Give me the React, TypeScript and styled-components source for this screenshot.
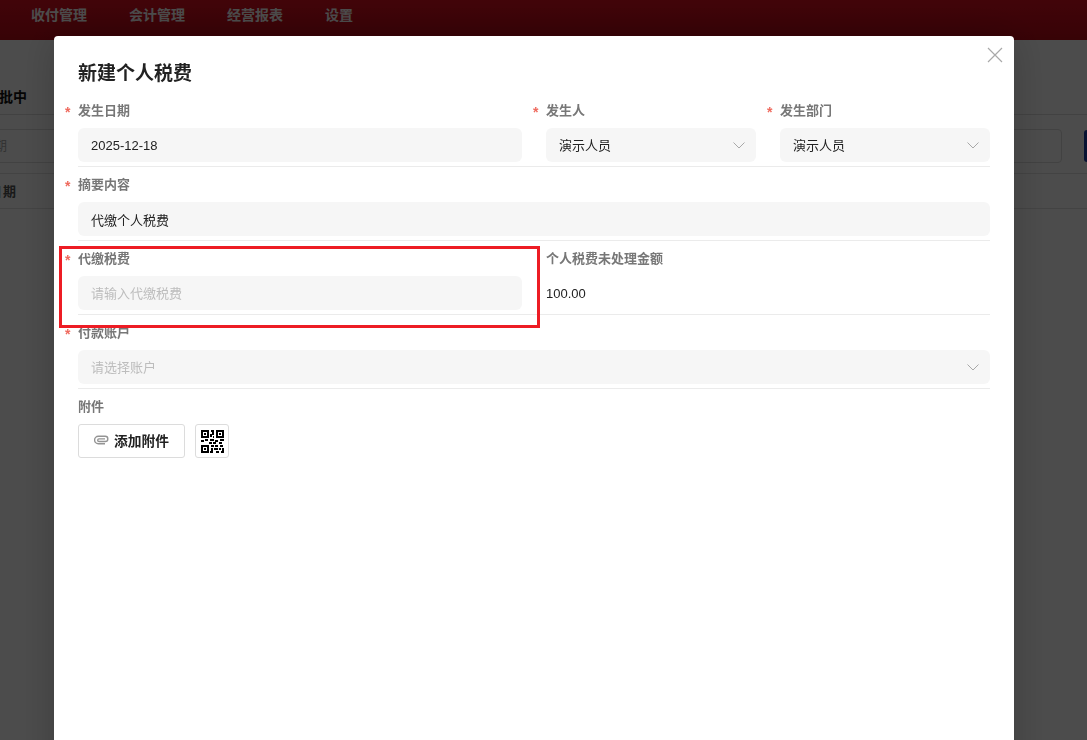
import * as React from 'react';
import styled, { createGlobalStyle } from 'styled-components';

const GlobalStyle = createGlobalStyle`
  html, body {
    margin: 0;
    height: 100%;
    overflow: hidden;
    font-family: "Liberation Sans", "Noto Sans CJK SC", sans-serif;
  }
`;

const FONT = `"Liberation Sans", "Noto Sans CJK SC", sans-serif`;

const Page = styled.div`
  height: 740px;
  background: #fff;
  overflow: hidden;
`;

const TopBar = styled.div`
  height: 40px;
  display: flex;
  gap: 42px;
  padding-left: 31px;
  align-items: flex-start;
  background: linear-gradient(#dc0f20, #b80a16);
`;

const NavItem = styled.div`
  font-size: 14px;
  font-weight: 700;
  line-height: 30px;
  color: #fff;
`;

const PageBody = styled.div`
  margin-left: -60px;
  padding-top: 46px;
`;

const PageTitle = styled.div`
  padding-left: 45px;
  height: 28px;
  line-height: 22px;
  font-size: 14px;
  font-weight: 700;
  color: #111;
  border-bottom: 1px solid #ddd;
`;

const FilterRow = styled.div`
  margin-top: 14px;
  padding-right: 25px;
  display: flex;
  justify-content: space-between;
  align-items: flex-start;
  gap: 8px;
`;

const DateBox = styled.div`
  width: 160px;
  height: 32px;
  padding-left: 40px;
  border: 1px solid #ddd;
  border-radius: 4px;
  font-size: 13px;
  line-height: 32px;
  color: #aaa;
`;

const FilterBox = styled.div`
  width: 100px;
  height: 32px;
  border: 1px solid #ddd;
  border-radius: 4px;
`;

const PrimaryStub = styled.div`
  position: fixed;
  left: 1084px;
  top: 130px;
  width: 10px;
  height: 32px;
  border-radius: 3px;
  background: #1d3fa8;
`;

const TableHead = styled.div`
  margin-top: 10px;
  height: 34px;
  padding-left: 49px;
  font-size: 13px;
  font-weight: 700;
  line-height: 36px;
  color: #555;
  border-top: 1px solid #e2e2e2;
  border-bottom: 1px solid #e2e2e2;
  letter-spacing: 1px;
`;

const Mask = styled.div`
  position: fixed;
  inset: 0;
  background: rgba(0, 0, 0, 0.7);
`;

const Modal = styled.div`
  position: fixed;
  left: 54px;
  top: 36px;
  width: 960px;
  height: 760px;
  box-sizing: border-box;
  padding: 0 24px;
  background: #fff;
  border-radius: 4px;
  box-shadow: 0 0 40px rgba(0, 0, 0, 0.2);
  font-family: ${FONT};
`;

const CloseButton = styled.button`
  position: absolute;
  top: 11px;
  right: 11px;
  width: 16px;
  height: 16px;
  padding: 0;
  border: 0;
  background: none;
  display: block;
`;

const ModalTitle = styled.h2`
  margin: 0;
  padding-top: 26px;
  height: 38px;
  font-size: 19px;
  line-height: 24px;
  font-weight: 700;
  color: #222;
`;

const Row = styled.div<{ $cols: string }>`
  display: grid;
  grid-template-columns: ${(p) => p.$cols};
  column-gap: 24px;
  height: 67px;
  margin-bottom: 7px;
  box-sizing: border-box;
  padding-bottom: 4px;
  border-bottom: 1px solid #ebebeb;
`;

const Field = styled.div`
  display: flex;
  flex-direction: column;
`;

const Label = styled.label<{ $required?: boolean }>`
  position: relative;
  height: 22px;
  margin-bottom: 6px;
  font-size: 13px;
  font-weight: 700;
  line-height: 22px;
  color: #777;

  &::before {
    content: ${(p) => (p.$required ? '"*"' : 'none')};
    position: absolute;
    left: -13px;
    top: 1px;
    font-size: 14px;
    font-weight: 700;
    color: #ef6a5e;
  }
`;

const Control = styled.div<{ $muted?: boolean }>`
  height: 34px;
  box-sizing: border-box;
  padding: 0 13px;
  display: flex;
  align-items: center;
  justify-content: space-between;
  background: #f6f6f6;
  border-radius: 6px;
  font-size: 13px;
  color: ${(p) => (p.$muted ? '#bdbdbd' : '#222')};
`;

const Placeholder = styled.span`
  position: relative;
  top: -1px;
`;

const StaticValue = styled.div`
  height: 34px;
  line-height: 36px;
  font-size: 13px;
  color: #222;
`;

const Chevron = () => (
  <svg width="12" height="7" viewBox="0 0 12 7" fill="none" stroke="#a8a8a8" strokeWidth="1">
    <path d="M0.5 0.5 L6 6 L11.5 0.5" />
  </svg>
);

const SelectControl = styled(Control)`
  padding-right: 11px;
`;

const AttachSection = styled.div`
  display: flex;
  flex-direction: column;
`;

const AttachActions = styled.div`
  display: flex;
  gap: 10px;
`;

const AttachButton = styled.button`
  width: 107px;
  height: 34px;
  padding: 0 0 2px;
  display: flex;
  align-items: center;
  justify-content: center;
  gap: 5px;
  background: #fff;
  border: 1px solid #dcdcdc;
  border-radius: 3px;
  font-family: ${FONT};
  font-size: 13.75px;
  font-weight: 700;
  color: #222;
`;

const QrButton = styled.button`
  width: 34px;
  height: 34px;
  padding: 0;
  display: flex;
  align-items: center;
  justify-content: center;
  background: #fff;
  border: 1px solid #dcdcdc;
  border-radius: 3px;
`;

const Highlight = styled.div`
  position: fixed;
  left: 59px;
  top: 246px;
  width: 481px;
  height: 82px;
  box-sizing: border-box;
  border: 3px solid #ed1c24;
`;

const QR_MODULES = [
  [10, 0, 3, 2], [11, 2, 2, 3], [9, 4, 2, 3], [12, 6, 1, 2],
  [0, 10, 3, 2], [4, 9, 3, 2], [9, 9, 4, 2], [14, 10, 3, 2], [19, 9, 4, 2],
  [8, 12, 3, 2], [12, 12, 3, 2], [18, 12, 3, 2],
  [10, 15, 3, 2], [14, 15, 3, 2], [19, 15, 3, 2],
  [10, 18, 2, 3], [13, 18, 4, 2], [18, 18, 2, 2], [21, 18, 2, 3],
  [9, 21, 3, 2], [15, 21, 3, 2], [20, 21, 3, 2],
];

const QrIcon = () => (
  <svg width="23" height="23" viewBox="0 0 23 23" shapeRendering="crispEdges">
    {[[0, 0], [15, 0], [0, 15]].map(([x, y]) => (
      <g key={`${x}-${y}`}>
        <rect x={x + 1} y={y + 1} width="6" height="6" fill="none" stroke="#000" strokeWidth="2" />
        <rect x={x + 3} y={y + 3} width="2" height="2" fill="#000" />
      </g>
    ))}
    {QR_MODULES.map(([x, y, w, h]) => (
      <rect key={`${x}-${y}`} x={x} y={y} width={w} height={h} fill="#000" />
    ))}
  </svg>
);

const ClipIcon = () => (
  <svg width="15" height="10" viewBox="0 0 15 10" fill="none" stroke="#949494" strokeWidth="1.4">
    <path d="M11 8.7 H4.3 A3.7 3.7 0 0 1 4.3 1.3 H11.2 A2.6 2.6 0 0 1 11.2 6.5 H5 A1.3 1.3 0 0 1 5 3.9 H11" />
  </svg>
);

export default function App() {
  return (
    <>
      <GlobalStyle />
      <Page>
        <TopBar>
          <NavItem>收付管理</NavItem>
          <NavItem>会计管理</NavItem>
          <NavItem>经营报表</NavItem>
          <NavItem>设置</NavItem>
        </TopBar>
        <PageBody>
          <PageTitle>审批中</PageTitle>
          <FilterRow>
            <DateBox>日期</DateBox>
            <FilterBox />
          </FilterRow>
          <TableHead>日期</TableHead>
        </PageBody>
        <PrimaryStub />
      </Page>
      <Mask />
      <Modal>
        <CloseButton aria-label="关闭">
          <svg width="16" height="16" viewBox="0 0 16 16" stroke="#a9a9a9" strokeWidth="1.2">
            <path d="M1 1 L15 15 M15 1 L1 15" />
          </svg>
        </CloseButton>
        <ModalTitle>新建个人税费</ModalTitle>
        <Row $cols="444px 210px 210px">
          <Field>
            <Label $required>发生日期</Label>
            <Control>2025-12-18</Control>
          </Field>
          <Field>
            <Label $required>发生人</Label>
            <SelectControl>
              <Placeholder>演示人员</Placeholder>
              <Chevron />
            </SelectControl>
          </Field>
          <Field>
            <Label $required>发生部门</Label>
            <SelectControl>
              <Placeholder>演示人员</Placeholder>
              <Chevron />
            </SelectControl>
          </Field>
        </Row>
        <Row $cols="1fr">
          <Field>
            <Label $required>摘要内容</Label>
            <Control>代缴个人税费</Control>
          </Field>
        </Row>
        <Row $cols="444px 444px">
          <Field>
            <Label $required>代缴税费</Label>
            <Control $muted>
              <Placeholder>请输入代缴税费</Placeholder>
            </Control>
          </Field>
          <Field>
            <Label>个人税费未处理金额</Label>
            <StaticValue>100.00</StaticValue>
          </Field>
        </Row>
        <Row $cols="1fr">
          <Field>
            <Label $required>付款账户</Label>
            <SelectControl $muted>
              <Placeholder>请选择账户</Placeholder>
              <Chevron />
            </SelectControl>
          </Field>
        </Row>
        <AttachSection>
          <Label>附件</Label>
          <AttachActions>
            <AttachButton>
              <ClipIcon />
              添加附件
            </AttachButton>
            <QrButton>
              <QrIcon />
            </QrButton>
          </AttachActions>
        </AttachSection>
      </Modal>
      <Highlight />
    </>
  );
}
